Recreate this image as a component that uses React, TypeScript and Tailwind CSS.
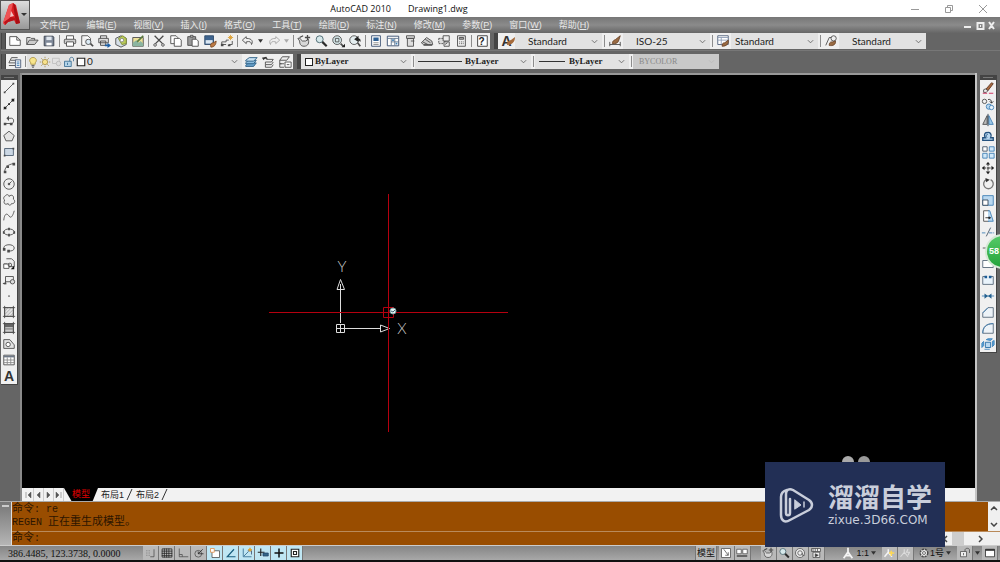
import React from 'react';
import clsx from 'clsx';

const K = '#4b4b4b';
const B = '#3f7fb5';
const LB = '#b9d8f0';

// All icons share a 16x16 grid
const icons: Record<string, React.ReactNode> = {
  new: <path d="M2 3h8l4 4v6H2zM10 3v4h4" fill="#fff" />,
  open: <><path d="M2 12V4h4l1 1h4v2" fill="#ddd" /><path d="M2 12l3-5h10l-4 5z" fill="#ccc" /></>,
  save: <><path d="M2.500 2.500h10l1 1v10h-11z" fill="#7e8898" stroke="#333b48" /><path d="M5 3h6v4H5z" fill="#dfe6ee" stroke="none" /><path d="M5 10h6v3H5z" fill="#fff" stroke="none" /></>,
  print: <><path d="M4 6V2h8v4" fill="#fff" /><rect x="1.500" y="6" width="13" height="5" rx="1" fill="#ccc" /><path d="M4 9h8v5H4z" fill="#fff" /></>,
  preview: <><path d="M2 2h7l3 3v2M2 2v11h4" fill="#fff" /><circle cx="9.500" cy="9" r="3" fill="#dcebf5" /><path d="M12 11l3 3" strokeWidth="2" /></>,
  publish: <><path d="M4 5V2h7v3M2 5h11v5H2zM4 8h6v5H4z" fill="#ddd" /><path d="M9 12h3v-2l4 3-4 3v-2H9z" fill="#1d5fa5" stroke="none" /></>,
  dwf: <><path d="M2 5l6-3 6 3v7l-6 3-6-3z" fill="#d6dfe8" /><path d="M5 5l5-3 4 3v6l-5 1z" fill="#b9ca59" stroke="#7d8b35" /><circle cx="9" cy="7" r="2" fill="#fff" stroke="#888" /></>,
  markup: <><path d="M2 4h12v10H2z" fill="#eee19a" /><path d="M2 10l4-3 3 3 2-2 3 3v3H2z" fill="#8bb5a0" stroke="none" /><path d="M7 9l7-7" stroke="#5b7b40" strokeWidth="2" /></>,
  cut: <><path d="M3 2l9 9M13 2l-9 9" strokeWidth="1.500" /><circle cx="3.500" cy="12.500" r="1.500" /><circle cx="12.500" cy="12.500" r="1.500" /></>,
  copy: <><path d="M2 2h6l2 2v7H2z" fill="#fff" /><path d="M6 5h6l2 2v7H6z" fill="#fff" /></>,
  paste: <><path d="M2 3h9v10H2z" fill="#999" /><path d="M5 1.500h3v2H5z" fill="#ddd" /><path d="M7 6h5l2 2v6H7z" fill="#fff" /></>,
  match: <><path d="M2 2h10v10H2z" fill="#3e648f" stroke="#2e4a6b" /><path d="M3 7h8v4H3z" fill="#dbe7f2" stroke="none" /><path d="M9 15c-1-3 0-5 3-5l3-2c0 4-2 7-6 7z" fill="#bd7b45" stroke="#7d4c25" /></>,
  blockedit: <><path d="M2 12h5M2 12v-3h5V7h3M10 12h4v-4" /><path d="M1 11h3v3H1zM9 12h3v2H9z" fill={K} stroke="none" /><path d="M12 1v6M9 4h6M10 2l4 4M14 2l-4 4" stroke="#dda032" /></>,
  undo: <path d="M6 3L1.500 7 6 11V9c4-1 6 0 6 3 2-3 1-7-6-7z" fill="#eee" />,
  redo: <path d="M10 3l4.500 4L10 11V9c-4-1-6 0-6 3-2-3-1-7 6-7z" fill="#eee" stroke="#a5a5a5" />,
  pan: <><path d="M3 8L1 5c4-1 3 2 5 3h4l3-2c1 4 0 8-5 8-4 0-5-3-5-6z" fill="#d8d8d8" /><path d="M3 4l4-2M12 1v6M9 4h6" strokeWidth="1.500" /></>,
  zoom: <><circle cx="6.500" cy="6" r="4" fill="#d6e8ea" stroke="#426069" /><path d="M9.500 9l5 5" strokeWidth="2.500" stroke="#2c2c2c" /></>,
  zoomwin: <><circle cx="7" cy="7" r="5" fill="#d6e8ea" /><path d="M5 5h4v4H5z" /><path d="M11 11l3 3" strokeWidth="2" /><path d="M12 15h4v-4z" fill="#222" stroke="none" /></>,
  zoomprev: <><circle cx="7" cy="7" r="5" fill="#e4edef" /><path d="M11 10l3 4" strokeWidth="2" /><path d="M7 6l5-4v3c2 0 3 2 2 4-1-2-2-2-2-2v2z" fill="#222" stroke="none" /></>,
  props: <><path d="M3 2h10v12H3z" fill="#fff" stroke="#31486b" /><path d="M5 4h6v4H5z" fill="#2e6094" stroke="none" /><path d="M5 10h6M5 12h6" stroke="#888" /></>,
  dc: <><path d="M1.500 2.500h13v11h-13z" fill="#fff" stroke="#31486b" /><path d="M2 5h12M6 5v8M10 5v8M6 9h8" stroke="#60738c" /><path d="M7 6h2v2H7zM11 10h2v2h-2z" fill={B} stroke="none" /></>,
  palette: <><path d="M4 2h9v3H4zM5 5h7v9H5z" fill="#ddd" /><path d="M9 8h4" /></>,
  sheet: <><path d="M1.500 10l6-6 6 4 1 4H4z" fill="#ccc" /><path d="M3 9l6 3M6 6l6 4M4 13h10" /></>,
  mark: <><path d="M2 5h7v6H2z" fill="#ddd" strokeDasharray="2 1" /><path d="M7 2h7v6H7zM8 9h6v5H8z" fill="#eee" /><path d="M9 12l3-2" /></>,
  calc: <><path d="M4 2h9v12H4z" fill="#eee" /><path d="M6 4h5v2H6z" fill="#aaa" /><path d="M6 9h5M6 11h5" strokeDasharray="1 1" /></>,
  help: <path d="M3 2h11v12H3z" fill="#fff" stroke="#333" />,
  dimstyle: <><path d="M2 9v5M14 9v5M2 12h12" /><path d="M5 11c0-4 3-4 4-5l5-4-2 6c-1 3-4 3-7 3z" fill="#9a6b43" stroke="#6b4529" /></>,
  tablestyle: <><path d="M2 2h12v10H2z" fill="#fff" stroke="#4c5b78" /><path d="M2 4h12M2 7h12M6 4v8" stroke="#8d9bb5" /><path d="M7 14c0-4 2-4 3-4l4-3c1 4-2 7-7 7z" fill="#9a6b43" stroke="#6b4529" /></>,
  leader: <><path d="M2 13l4-9h3" /><circle cx="11" cy="5" r="3" fill="#eee" /><path d="M6 13c0-4 2-4 4-4l3-1c1 4-3 6-7 5z" fill="#9a6b43" stroke="#6b4529" /></>,
  layers: <><path d="M4 3h7M3 6h7M1 9h7M4 3L1 9M1 12h7" /><path d="M8.500 5.500h6v9h-6z" fill="#e9edf4" stroke="#4c5b78" /><path d="M10 8h3M10 10h3M10 12h3" stroke={B} /></>,
  bulb: <><path d="M5 9C2 6 4 2 8 2s6 4 3 7v2H5z" fill="#f7e58c" stroke="#a48b35" /><path d="M6 13h4M7 15h2" strokeWidth="1.500" /></>,
  sun: <><circle cx="8" cy="8" r="3.500" fill="#f8e28c" stroke="#a18a42" /><path d="M8 1v2M8 13v2M1 8h2M13 8h2M3 3l2 2M11 11l2 2M13 3l-2 2M3 13l2-2" stroke="#a18a42" /></>,
  vpfreeze: <><path d="M2 3h9v7H2z" stroke="#bbb" /><circle cx="10" cy="10" r="3" fill="#ddd" stroke="#b4b4b4" /></>,
  unlock: <><path d="M2 7h9v7H2z" fill="#b3d3e8" stroke="#29618a" /><path d="M9 7V4c0-3 5-3 5 0v3" stroke="#29618a" /><path d="M6 9v3" stroke="#29618a" /></>,
  swatch: <path d="M3 3h10v10H3z" fill="#fff" stroke="#222" strokeWidth="1.500" />,
  stack: <><path d="M2 12l3-3h9l-3 4H2z" fill="#6ba4ce" stroke="#24587f" /><path d="M2 9l3-3h9l-3 4H2z" fill="#8dbddf" stroke="#24587f" /><path d="M2 6l4-3h9l-4 4H2z" fill="#c8e1f2" stroke="#24587f" /></>,
  layprev: <><path d="M6 5h8l-2 3H5M5 8v3h7l2-3M5 11v3h7l2-3" fill="#eee" /><path d="M6 2L1 3l2 3c1-2 3-2 5-1" fill="#333" stroke="none" /></>,
  laystate: <><path d="M5 2h8l-3 4H2zM2 6v4h5M4 10h-2v4h5" fill="#eee" /><path d="M8 8h7v6H8zM10 11h3" fill="#fff" /></>,
  line: <><path d="M3 13L13 3" /><path d="M2 12h2v2H2zM12 2h2v2h-2z" fill={K} stroke="none" /></>,
  xline: <><path d="M2 14L14 2" /><path d="M2 11h3v3H2zM7 7h2v2H7zM11 2h3v3h-3z" fill="#222" stroke="none" /></>,
  pline: <><path d="M3 12h8c3 0 3-6 0-6H7" /><path d="M2 11h3v3H2zM9 11h3v3H9zM8 3L5 6l3 3z" fill={K} stroke="none" /></>,
  polygon: <path d="M8 2.500l6 5-2.500 6h-7L2 7.500z" fill="#e4e4e4" />,
  rect: <><path d="M3 4h10v8H3z" fill="#cbd7e4" stroke="#4b5d70" /><path d="M2 11h2v2H2zM12 3h2v2h-2z" fill={K} stroke="none" /></>,
  arc: <><path d="M3 13c0-6 4-9 10-10" /><path d="M2 11h3v3H2zM5 5h3v3H5zM12 2h3v3h-3z" fill={K} stroke="none" /></>,
  circle: <><circle cx="8" cy="8" r="6" fill="#eee" /><circle cx="8" cy="8" r="1" fill={K} /><path d="M8 8l3-3" /></>,
  cloud: <path d="M4 3c2-2 4-1 4 1 3-3 6-1 5 3 3 2 1 6-2 5-1 3-4 2-4 0-3 2-6 0-4-4-2-1-1-4 1-5z" fill="#eee" />,
  spline: <path d="M2 13c1-9 4-8 6-5s4 1 6-6" />,
  ellipse: <><ellipse cx="8" cy="8" rx="6" ry="3.500" fill="#eee" /><path d="M7 3h2v3H7zM7 10h2v3H7zM1 7h2v3H1zM13 7h2v3h-2z" fill={K} stroke="none" /></>,
  ellarc: <><path d="M2 8c0-5 12-5 12 0 0 3-4 4-6 3" /><path d="M1 8h3v3H1zM6 10h3v3H6z" fill={K} stroke="none" /></>,
  insert: <><path d="M5 2h6l3 3v6H6V8H2" fill="#eee" /><path d="M2 8h6v5H2z" fill="#fff" /><circle cx="9" cy="9" r="2" /><path d="M10 14h4v-4z" fill="#111" stroke="none" /></>,
  block: <><path d="M4 4h9v6H4z" fill="#eee" /><circle cx="12" cy="10" r="2.500" fill="#ddd" /><path d="M4 8v4H1" /><path d="M2 11h3v2H2z" fill={K} stroke="none" /></>,
  point: <path d="M7 7h2v2H7z" fill="#888" stroke="none" />,
  hatch: <><path d="M3 3h10v10H3z" fill="#e2e2e2" /><path d="M3 7l4-4M3 11l8-8M5 13l8-8M9 13l4-4" stroke="#aaa" /><path d="M1 3h14M3 1v14M13 1v14M1 13h14" /></>,
  gradient: <><path d="M3 3h10v10H3z" fill="#ccc" /><path d="M3 3h10v4H3z" fill="#666" stroke="none" /><path d="M3 8h10v2H3z" fill="#999" stroke="none" /><path d="M1 3h14M3 1v14M13 1v14M1 13h14" /></>,
  region: <><path d="M2 3h7l5 6v4H2z" fill="#e4e4e4" /><circle cx="7" cy="8.500" r="2.500" fill="#fff" /></>,
  table: <><path d="M2 2.500h12v11H2z" fill="#fff" /><path d="M2 3h12v2H2z" fill="#6e7887" stroke="none" /><path d="M2 8h12M2 11h12M6 5v8M10 5v8" stroke="#888" /></>,
  erase: <><path d="M5 10l7-8 2 1-6 8z" fill="#a9683f" stroke="#5d3822" /><path d="M3 10l2-1 3 2-2 2H3z" fill="#eee" /><path d="M2 14h12" stroke="#c25" strokeDasharray="5 2" /></>,
  copyobj: <><circle cx="4" cy="5" r="2.500" /><path d="M8 3c3-1 4 1 4 4M10 5l2 2 2-2" stroke="#222" /><circle cx="9" cy="11" r="3" stroke={B} fill={LB} /><circle cx="12" cy="12" r="2.500" stroke={B} fill="#e8f3fb" /></>,
  mirror: <><path d="M7 3v10H2z" fill="#bbb" /><path d="M9 3v10h5z" fill="#9cc8e8" stroke={B} /><path d="M8 1v14" stroke="#234" /></>,
  offset: <><path d="M3 13h11v-3h-3c2-4-1-7-4-6-3 0-4 3-2 6H2v3z" fill={LB} stroke="#25527e" strokeWidth="1.500" /><path d="M7 10c-2-2-1-4 1-4" stroke="#25527e" /></>,
  array: <><path d="M2 2h5v5H2z" fill="#fff" stroke="#456" /><path d="M9.500 2H15v5H9.500zM2 9.500h5V15H2zM9.500 9.500H15V15H9.500z" fill="#d1e8f8" stroke={B} /></>,
  move: <><path d="M8 2v12M2 8h12" stroke="#222" strokeDasharray="4 1" /><path d="M8 1L5.500 4h5zM8 15l-2.500-3h5zM1 8l3-2.500v5zM15 8l-3-2.500v5z" fill="#222" stroke="none" /></>,
  rotate: <><path d="M6 3a5.500 5.500 0 1 0 5 0" strokeWidth="1.500" stroke="#777" /><path d="M5 1l5 2-4 3z" fill="#333" stroke="none" /></>,
  scale: <><path d="M2 3h12v11H2z" fill={LB} stroke={B} /><path d="M2 8h6v6H2z" fill="#fff" stroke="#345" /></>,
  stretch: <><path d="M3 2h6v12H3z" fill="#fff" /><path d="M8 2h2l4 12H8" fill={LB} stroke={B} /><path d="M5 10h5M9 9l2 1-2 1z" fill="#222" stroke="#222" /></>,
  trim: <><path d="M1 9h5M9 9h6" stroke={B} strokeDasharray="4 1" /><path d="M6 13l5-10" stroke="#456" /></>,
  extend: <path d="M2 8h9M12 3v10" />,
  breakpt: <path d="M2 4h12v8H2z" fill="#fff" stroke="#567" />,
  breakobj: <><path d="M6 4H2v9h12V4h-4" fill="#e9f3fb" stroke="#567" /><path d="M4 3h3v3H4zM9 3h3v3H9z" fill="#1c5c96" stroke="none" /></>,
  join: <><path d="M1 8h14" stroke={B} /><path d="M4 5l4 3-4 3zM12 5L8 8l4 3z" fill="#24618f" stroke="none" /></>,
  chamfer: <><path d="M2 14V9l6-6h6v11z" fill="#edf3f8" stroke="#567" /><path d="M2 9l6-6" stroke={B} /></>,
  fillet: <><path d="M2 14c0-7 4-11 12-11v11z" fill="#edf3f8" stroke="#567" /><path d="M2 14C2 7 6 3 14 3" stroke={B} /></>,
  explode: <><path d="M5 6h6v6H5z" fill={LB} stroke="#246aa5" /><path d="M1 7l2-2v5l-2 2zM13 5l2-1v5l-2 2zM6 3l2-1h5l-2 2zM4 14h6" fill="#5ca5da" stroke="#3b82ba" /></>,
  snap: <path d="M2 5h1M5 5h1M2 8h1M5 8h1M2 11h1M5 11h1M12 3v10H7" />,
  grid: <path d="M1.500 2.500h13v11h-13zM1 5.500h14M1 8.500h14M1 11.500h14M4.500 2v12M7.500 2v12M10.500 2v12" stroke="#222" />,
  ortho: <path d="M3 2v11h12M3 10h4v3" />,
  polar: <><circle cx="7" cy="9" r="4.500" /><path d="M7 9h7M7 9l6-6M7 9V6" stroke="#222" /></>,
  osnap: <><path d="M4 5h10v9H4z" fill="#fff" stroke="#444" /><path d="M2 2h5v5H2z" fill="#fff" stroke="#e0873c" /></>,
  otrack: <path d="M14 13H3L12 3" stroke="#175c7c" strokeWidth="1.500" />,
  ducs: <><path d="M3 2v11h11M4 12l6-6" stroke="#235f84" /><path d="M9 5h5v5" stroke="#346" /><path d="M12 1v5M9.500 3.500h5" stroke="#e2a330" strokeWidth="2" /></>,
  dyn: <><path d="M5 2v10M1 7h9" stroke="#222" strokeWidth="1.500" /><path d="M8 8h7v4H8z" fill="#368" stroke="#246" /></>,
  lwt: <path d="M8 2v12M2 8h12" stroke="#111" strokeWidth="2" />,
  qp: <path d="M3 3h10v10H3zM6 6h4v4H6z" fill="#fff" stroke="#222" strokeWidth="1.500" />,
  modelview: <><path d="M2 2h12v12H2z" fill="#fff" /><path d="M5 3l6 8M11 7v4H7" /></>,
  quickview: <><path d="M1 3h6v6H1zM9 3h6v6H9z" fill="#fff" /><path d="M1 12h14" strokeWidth="2" /></>,
  wheel: <><circle cx="8" cy="8" r="6" fill="#eee" /><circle cx="8" cy="8" r="3" /><path d="M11 8v3h3" /></>,
  motion: <><path d="M2 2h12v4H2zM4 7h9v7H4z" fill="#eee" /><path d="M4 2v4M7 2v4M10 2v4M7 9l4 2-4 2z" fill="#333" /></>,
  person: <path d="M8 2v5L3 14M8 7l5 7M5 11h6" stroke="#f4f4f4" strokeWidth="2" />,
  annovis: <><path d="M7 3v4L2 13M7 7l5 6" stroke="#f4f4f4" strokeWidth="2" /><path d="M11 5v7M8 8h7" stroke="#ffd951" strokeWidth="2" /></>,
  annoauto: <path d="M7 3v4L2 13M7 7l5 6M12 3l-2 4h4l-2 4" stroke="#dcdcdc" strokeWidth="1.500" />,
  gear: <><circle cx="8" cy="8" r="5" fill="#eee" strokeWidth="2" strokeDasharray="3 1" /><circle cx="8" cy="8" r="2" /></>,
  padlock: <><path d="M2 6h8v7H2z" fill="#eee" /><path d="M8 6V4c0-3 6-3 6 0v4M6 8v3" /></>,
  clean: <><path d="M2 3h12v10H2z" fill="#fff" stroke="#222" /><path d="M2 4h12" stroke="#222" strokeWidth="2" /></>,
};

const Icon = ({ name, small }: { name: string; small?: boolean }) => (
  <svg viewBox="0 0 16 16" className={clsx('shrink-0', small ? 'h-3 w-3' : 'h-[14px] w-[14px]')} fill="none" stroke={K} strokeWidth="1" aria-hidden="true">
    {icons[name]}
  </svg>
);

const Tool = ({ name, vertical }: { name: string; vertical?: boolean }) => (
  <button aria-label={name} className={clsx('flex shrink-0 items-center justify-center', vertical ? 'h-4 w-full' : 'relative h-full w-[17px]')}>
    {name === 'text' || name === 'textstyle' ? (
      <span className="font-['Liberation_Sans'] text-[14px] leading-4 font-bold text-[#333]">A</span>
    ) : (
      <Icon name={name} />
    )}
    {name === 'help' && <span className="absolute font-['Liberation_Sans'] text-[10px] font-bold text-[#222]">?</span>}
    {name === 'textstyle' && (
      <svg viewBox="0 0 8 8" className="absolute right-0 bottom-1 h-2 w-2"><path d="M0 8c0-4 2-4 4-5l4-3c0 5-3 8-8 8z" fill="#a56b3c" /></svg>
    )}
  </button>
);

const Sep = () => (
  <span className="flex w-1 shrink-0 justify-center py-[2px]">
    <span className="w-px bg-[#8c8c8c]" />
  </span>
);

const Grip = () => <span className="w-[5px] shrink-0 border-x border-[#444] bg-[#585858]" />;

const Down = ({ faded }: { faded?: boolean }) => (
  <span className="flex w-[9px] shrink-0 items-center justify-center">
    <svg viewBox="0 0 6 4" className="h-1 w-[5px]" fill={faded ? '#aaa' : '#333'}><path d="M0 0h6L3 4z" /></svg>
  </span>
);

type DropProps = { label: string; value: string; className: string; box?: string; disabled?: boolean; children?: React.ReactNode };

const Drop = ({ label, value, className, box, disabled, children }: DropProps) => (
  <label className={clsx('relative flex h-full shrink-0 items-center', disabled ? 'bg-[#c9c9c9]' : 'bg-[#e2e2e2]', box)}>
    {children && <span className="pointer-events-none absolute left-0 flex items-center">{children}</span>}
    <select aria-label={label} disabled={disabled} className={clsx('h-full w-full appearance-none bg-transparent', disabled ? 'text-[#888]' : 'text-[#222]', className)}>
      <option>{value}</option>
    </select>
    <svg viewBox="0 0 8 5" className="pointer-events-none absolute right-1 h-[5px] w-[7px]" fill="none" stroke={disabled ? '#bbb' : '#666'}>
      <path d="M1 1l3 3 3-3" />
    </svg>
  </label>
);

const menus = [
  ['文件', 'F'], ['编辑', 'E'], ['视图', 'V'], ['插入', 'I'], ['格式', 'O'], ['工具', 'T'],
  ['绘图', 'D'], ['标注', 'N'], ['修改', 'M'], ['参数', 'P'], ['窗口', 'W'], ['帮助', 'H'],
];

const standard = [
  'new', 'open', 'save', '|', 'print', 'preview', 'publish', 'dwf', 'markup', '|',
  'cut', 'copy', 'paste', 'match', 'blockedit', '|', 'undo', 'v', 'redo', 'v-', '|',
  'pan', 'zoom', 'zoomwin', 'zoomprev', '|', 'props', 'dc', 'palette', 'sheet', 'mark', 'calc', '|', 'help',
];

const draw = [
  'line', 'xline', 'pline', 'polygon', 'rect', 'arc', 'circle', 'cloud', 'spline', 'ellipse',
  'ellarc', 'insert', 'block', 'point', 'hatch', 'gradient', 'region', 'table', 'text',
];

const modify = [
  'erase', 'copyobj', 'mirror', 'offset', 'array', 'move', 'rotate', 'scale', 'stretch',
  'trim', 'extend', 'breakpt', 'breakobj', 'join', 'chamfer', 'fillet', 'explode',
];

const toggles = [
  ['snap', false], ['grid', false], ['ortho', false], ['polar', false], ['osnap', true],
  ['otrack', true], ['ducs', true], ['dyn', true], ['lwt', true], ['qp', true],
] as const;

const styleDrop = "pl-[13px] font-['Lato'] text-[10px]";
const layerDrop = "font-['Liberation_Serif'] text-[9px] font-bold";

const TitleBar = () => (
  <div className="flex h-[17px] shrink-0 items-center bg-white pr-3">
    <div className="flex flex-1 justify-center gap-[17px] pr-[112px] font-['Open_Sans'] text-[9px] leading-4 text-[#111]">
      <span>AutoCAD 2010</span>
      <span>Drawing1.dwg</span>
    </div>
    <div className="flex gap-6 text-[#999]">
      <button aria-label="Minimize">
        <svg className="h-[10px] w-[10px]" viewBox="0 0 10 10" stroke="currentColor"><path d="M1 5.500h8" /></svg>
      </button>
      <button aria-label="Restore">
        <svg className="h-[10px] w-[10px]" viewBox="0 0 10 10" fill="none" stroke="currentColor"><path d="M1.500 3.500h5v5h-5zM3.500 3V1.500h5v5H7" /></svg>
      </button>
      <button aria-label="Close">
        <svg className="h-[10px] w-[10px]" viewBox="0 0 10 10" stroke="currentColor"><path d="M1 1l8 8M9 1L1 9" /></svg>
      </button>
    </div>
  </div>
);

const MenuBar = () => (
  <nav className="flex h-4 shrink-0 items-center justify-between bg-linear-to-b from-[#777] via-[#8b8b8b] to-[#666] pr-1 pl-10">
    <div className="flex gap-[17px] font-['Liberation_Sans','Noto_Sans_CJK_SC',sans-serif] text-[9px] leading-3 text-[#e8e8e8]">
      {menus.map(([name, key]) => (
        <button key={key} className="whitespace-nowrap">
          {name}(<u>{key}</u>)
        </button>
      ))}
    </div>
    <svg viewBox="0 0 32 9" className="h-[9px] w-8" fill="none" stroke="#eee" strokeWidth="2" aria-hidden="true">
      <path d="M0 6h7M13.500 2h6v6h-6zM16 5h1M25 1l5 7M30 1l-5 7" />
    </svg>
  </nav>
);

const AppButton = () => (
  <button aria-label="Application menu" className="absolute top-0 left-0 flex h-[30px] w-[30px] items-center justify-center border border-[#555] bg-linear-to-b from-[#ddd] to-[#999]">
    <svg viewBox="0 0 28 28" className="h-7 w-7">
      <path d="M8 4l4-2 3 2 4 18-4 1-2-4-6 2-3 3-2-2z" fill="#dc1f24" />
      <path d="M8 4l4-2L8 20l-4 4-2-2z" fill="#ee5355" />
      <path d="M14 4l5 18-4 1-3-21z" fill="#a90e14" />
      <path d="M10 10l3 5-4 1z" fill="#f3c1c1" />
      <path d="M3 21l7-5 5 1-1 2-7 2-3 3z" fill="#bb1118" />
      <path d="M20 12h6l-3 3z" fill="#333" />
    </svg>
  </button>
);

const Toolbars = () => (
  <div className="shrink-0 bg-[#656565] pl-px">
    <div className="flex h-[17px] items-stretch pb-px">
      <Grip />
      <div className="flex bg-[#efefef]">
        {standard.map((n, i) => (n === '|' ? <Sep key={i} /> : n[0] === 'v' ? <Down key={i} faded={n === 'v-'} /> : <Tool key={i} name={n} />))}
      </div>
      <span className="w-2 shrink-0 border-r-4 border-[#444] bg-[#656565]" />
      <div className="flex bg-[#efefef]">
        <Tool name="textstyle" />
        <Drop label="Text style" value="Standard" className={styleDrop} box="w-[87px]" />
        <Sep />
        <Tool name="dimstyle" />
        <Drop label="Dimension style" value="ISO-25" className={styleDrop} box="w-[87px]" />
        <Sep />
        <Tool name="tablestyle" />
        <Drop label="Table style" value="Standard" className="pl-1 font-['Lato'] text-[10px]" box="w-[87px]" />
        <Sep />
        <Tool name="leader" />
        <Drop label="Multileader style" value="Standard" className={styleDrop} box="w-[87px]" />
      </div>
    </div>
    <div className="flex h-[23px] items-stretch border-t border-[#777] pt-[3px] pb-[4px]">
      <Grip />
      <div className="flex bg-[#efefef]">
        <Tool name="layers" />
        <Sep />
        <Drop label="Layer" value="0" className="pl-[60px] font-['Lato'] text-[10px]" box="w-[215px]">
          <Icon name="bulb" small />
          <Icon name="sun" small />
          <Icon name="vpfreeze" small />
          <Icon name="unlock" small />
          <Icon name="swatch" small />
        </Drop>
        <Tool name="stack" />
        <Tool name="layprev" />
        <Tool name="laystate" />
      </div>
      <span className="w-2 shrink-0 border-r-4 border-[#444] bg-[#656565]" />
      <div className="flex bg-[#efefef]">
        <Drop label="Color" value="ByLayer" className={clsx(layerDrop, 'pl-[14px]')} box="w-[110px]">
          <span className="ml-1 h-2 w-2 border border-[#222] bg-white" />
        </Drop>
        <Sep />
        <Drop label="Linetype" value="ByLayer" className={clsx(layerDrop, 'pl-[50px]')} box="w-[116px]">
          <span className="ml-[3px] h-px w-11 bg-[#333]" />
        </Drop>
        <Sep />
        <Drop label="Lineweight" value="ByLayer" className={clsx(layerDrop, 'pl-[34px]')} box="w-[94px]">
          <span className="ml-1 h-px w-[26px] bg-[#333]" />
        </Drop>
        <Sep />
        <Drop label="Plot style" value="BYCOLOR" className="pl-[6px] font-['Liberation_Serif'] text-[8px]" box="w-[86px]" disabled />
      </div>
    </div>
  </div>
);

const SideBar = ({ tools }: { tools: string[] }) => (
  <div className="w-[17px] shrink-0 self-start border-r border-b border-[#444] bg-[#f0f0f0]">
    <div className="flex h-[5px] flex-col justify-center gap-px bg-[#444] px-[3px]">
      <span className="h-px bg-[#777]" />
    </div>
    {tools.map((n) => <Tool key={n} name={n} vertical />)}
  </div>
);

// UCS icon, crosshair and pick box
const Canvas = () => (
  <div className="relative min-h-0 flex-1 overflow-hidden bg-black">
    <svg className="absolute top-0 left-0 h-[412px] w-[500px]" fill="none" viewBox="0 0 500 412" aria-hidden="true">
      <path d="M318.500 248V209M323 253.500h35" stroke="#ddd" />
      <path d="M314.500 249.500h8v8h-8zM318.500 249v9M314 253.500h9M315 214.500l3.500-10 4 10zM358.500 250l9 3.500-9 3.500z" stroke="#ddd" />
      <rect x="247" y="237" width="239" height="1" fill="#b5000f" />
      <rect x="366" y="119" width="1" height="238" fill="#b5000f" />
      <path d="M361.500 232.500h10v10h-10z" stroke="#b5000f" />
      <circle cx="371" cy="236" r="3" fill="#e2f4f3" stroke="#7ca3a5" />
      <path d="M369 236l2 1 2-2" stroke="#467" />
      <text x="320" y="197" textAnchor="middle" className="fill-[#ccc] font-['Lato'] text-[15px] font-light">Y</text>
      <text x="380" y="259" textAnchor="middle" className="fill-[#ccc] font-['Lato'] text-[15px] font-light">X</text>
    </svg>
  </div>
);

const Slash = () => (
  <svg viewBox="0 0 12 12" className="h-3 w-3" stroke="#333"><path d="M3 12L8 1" /></svg>
);

const LayoutTabs = () => (
  <div className="flex h-[13px] shrink-0 items-stretch bg-[#f2f2f2] pl-[2px] font-['Liberation_Sans','Noto_Sans_CJK_SC',sans-serif] text-[9px] leading-[12px] text-[#222]">
    {['M2 1v6M7 1L4 4l3 3z', 'M6 1L3 4l3 3z', 'M3 1l3 3-3 3z', 'M2 1l3 3-3 3zM7 1v6'].map((d) => (
      <button key={d} aria-label="Scroll layouts" className="flex w-[10px] items-center justify-center border-r border-[#ccc]">
        <svg viewBox="0 0 9 8" className="h-2 w-[9px]" fill="#555" stroke="#555" strokeWidth="0.500"><path d={d} /></svg>
      </button>
    ))}
    <button className="relative flex w-[34px] justify-center text-[#e00000]">
      <svg viewBox="0 0 32 13" preserveAspectRatio="none" className="absolute inset-0 h-full w-full"><path d="M0 0h32l-5 13H7z" /></svg>
      <span className="relative">模型</span>
    </button>
    <button className="pl-[3px]">布局1</button>
    <Slash />
    <button>布局2</button>
    <Slash />
  </div>
);

const CommandLine = () => (
  <div className="flex h-[44px] shrink-0 border-t border-[#aaa] bg-[#994d00] font-['Liberation_Mono','Noto_Sans_CJK_SC',monospace] text-[10px] leading-[12px] text-[#2c1500]">
    <div className="w-3 shrink-0 border-r border-[#ddd] bg-linear-to-b from-[#777] to-[#b5b5b5] px-[2px] pt-[3px]">
      <div className="h-[2px] border-y border-[#ccc]" />
    </div>
    <div className="flex min-w-0 flex-1 flex-col">
      <div className="flex flex-1">
        <div className="flex-1 pt-px">
          <p><span className="text-[11px]">命令</span>: re</p>
          <p>REGEN <span className="text-[11px]">正在重生成模型。</span></p>
        </div>
        <div className="flex w-3 flex-col items-center justify-between bg-[#f0f0f0] py-1">
          <svg viewBox="0 0 8 5" className="h-[5px] w-2" fill="none" stroke="#444" strokeWidth="1.500"><path d="M1 4l3-3 3 3" /></svg>
          <svg viewBox="0 0 8 5" className="h-[5px] w-2" fill="none" stroke="#444" strokeWidth="1.500"><path d="M1 1l3 3 3-3" /></svg>
        </div>
      </div>
      <div className="flex h-[14px] border-t border-[#b98a5a]">
        <label className="flex flex-1 items-center">
          <span><span className="text-[11px]">命令</span>:</span>
          <input aria-label="命令" className="h-full min-w-0 flex-1 bg-transparent pl-1 outline-none" />
        </label>
        <div className="flex w-[58px] items-center bg-[#f0f0f0]">
          <svg viewBox="0 0 5 8" className="ml-px h-2 w-[5px]" fill="none" stroke="#444" strokeWidth="1.500"><path d="M4 1L1 4l3 3" /></svg>
          <span className="ml-1 h-full w-3 bg-[#cdcdcd]" />
          <svg viewBox="0 0 5 8" className="ml-[14px] h-2 w-[5px]" fill="none" stroke="#444" strokeWidth="1.500"><path d="M1 1l3 3-3 3" /></svg>
        </div>
      </div>
    </div>
  </div>
);

const StatusTool = ({ name, on }: { name: string; on?: boolean }) => (
  <button aria-label={name} className={clsx('flex w-4 shrink-0 items-center justify-center border-r border-[#777]', on ? 'bg-[#bfe6f3]' : 'bg-[#b9b9b9]')}>
    <Icon name={name} small />
  </button>
);

const StatusBar = () => (
  <footer className="flex h-[17px] shrink-0 items-stretch border-t border-b-2 border-t-[#ccc] border-b-[#111] bg-linear-to-b from-[#858585] to-[#a8a8a8] font-['Liberation_Sans','Noto_Sans_CJK_SC',sans-serif] text-[9px] leading-[14px] text-[#111]">
    <span className="w-[143px] shrink-0 pt-[2px] pl-2 font-['Liberation_Serif'] text-[10px] leading-3 whitespace-nowrap">386.4485, 123.3738, 0.0000</span>
    {toggles.map(([n, on]) => <StatusTool key={n} name={n} on={on} />)}
    <span className="flex-1" />
    <button className="mr-[2px] border-x border-[#777] bg-[#b9b9b9] px-px">模型</button>
    <StatusTool name="modelview" />
    <StatusTool name="quickview" />
    <span className="w-[10px]" />
    <StatusTool name="pan" />
    <StatusTool name="zoom" />
    <StatusTool name="wheel" />
    <StatusTool name="motion" />
    <span className="w-4" />
    <button className="flex items-center pr-1">
      <Icon name="person" />
      <span className="w-[14px] text-right">1:1</span>
      <Down />
    </button>
    <StatusTool name="annovis" />
    <StatusTool name="annoauto" />
    <button className="flex items-center px-1">
      <Icon name="gear" small />
      <span>1号</span>
      <Down />
    </button>
    <StatusTool name="padlock" />
    <Down />
    <StatusTool name="clean" />
    <span className="w-[2px]" />
  </footer>
);

const Brand = () => (
  <div className="absolute right-[55px] bottom-[15px] flex h-[85px] w-[180px] items-center gap-[13px] bg-[#222f55] pl-[14px] text-[#c9cedb]">
    <svg viewBox="0 0 36 38" className="h-[38px] w-[36px] shrink-0" fill="none" stroke="currentColor" strokeWidth="2.500" strokeLinecap="round" strokeLinejoin="round">
      <path d="M8 4C4 5 2 7 2 11v18c0 6 4 8 9 5l19-10c4-3 4-7 0-10L14 4C10 2 7 4 7 8v19c0 3 4 3 4 0V13" />
      <path d="M16 14l6 5-6 4z" fill="currentColor" strokeWidth="1" />
      <path d="M25 16v5" strokeWidth="1.500" />
    </svg>
    <div>
      <p className="font-['Liberation_Sans','Noto_Sans_CJK_SC',sans-serif] text-[26px] leading-[30px] font-bold whitespace-nowrap">溜溜自学</p>
      <p className="font-['DejaVu_Sans'] text-[12px] leading-[14px] whitespace-nowrap">zixue.3D66.COM</p>
    </div>
  </div>
);

export default function App() {
  return (
    <div className="relative flex h-screen flex-col overflow-hidden bg-[#656565]">
      <TitleBar />
      <MenuBar />
      <AppButton />
      <Toolbars />
      <main className="flex min-h-0 flex-1 bg-[#656565]">
        <div className="flex w-[22px] shrink-0 border-r-2 border-[#8a8a8a] pt-[2px] pl-px">
          <SideBar tools={draw} />
        </div>
        <div className="flex min-w-0 flex-1 flex-col border-t-2 border-[#999]">
          <Canvas />
          <LayoutTabs />
        </div>
        <div className="flex w-[25px] shrink-0 border-l-2 border-[#c5c5c5] pt-[2px] pl-[3px]">
          <SideBar tools={modify} />
        </div>
      </main>
      <CommandLine />
      {/* the two grey bumps peeking out from behind the brand card */}
      <div className="absolute right-[130px] bottom-[94px] flex gap-1">
        <span className="h-3 w-3 rounded-full bg-[#aaa]" />
        <span className="h-3 w-3 rounded-full bg-[#999]" />
      </div>
      <StatusBar />
      <Brand />
      <div className="absolute top-[234px] -right-5 flex h-[35px] w-[35px] items-center rounded-full border-2 border-[#d5e8d5] bg-linear-to-b from-[#55ca68] to-[#22a43b] pl-[2px] font-['Liberation_Sans'] text-[9px] font-bold text-white">
        58
      </div>
    </div>
  );
}
